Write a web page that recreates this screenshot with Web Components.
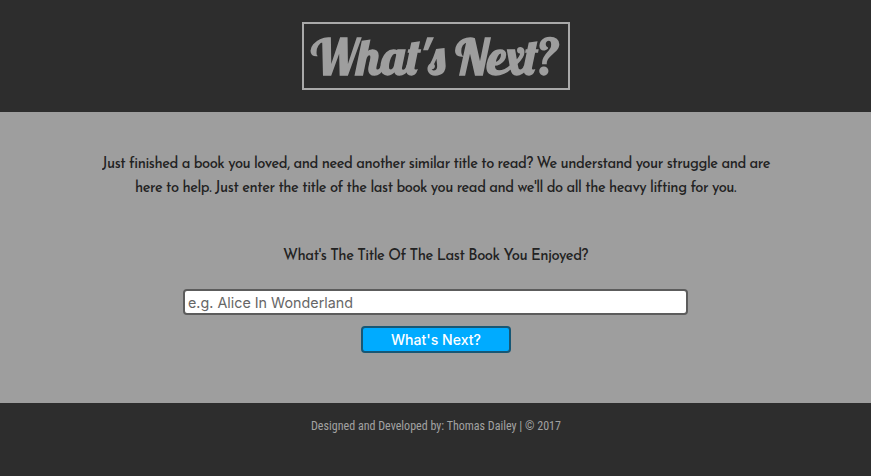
<!DOCTYPE html>
<html lang="en">
<head>
<meta charset="utf-8">
<title>What's Next?</title>
<style>
html, body { margin: 0; height: 100%; background: #2d2d2d; overflow: hidden; }
</style>
</head>
<body>
<book-app></book-app>
<script>
// One run of text stretched to a given width.
class FitText extends HTMLElement {
  connectedCallback() {
    const root = this.attachShadow({ mode: 'open' });
    root.innerHTML = `<style>
      :host { display: inline-block; white-space: nowrap; text-align: left; }
      span { display: inline-block; transform-origin: 0 50%; white-space: nowrap; }
    </style><span><slot></slot></span>`;
    const w = +this.getAttribute('width');
    this.style.width = w + 'px';
    const s = root.querySelector('span');
    s.style.transform = `scaleX(${w / s.getBoundingClientRect().width})`;
  }
}

class SiteHeader extends HTMLElement {
  constructor() {
    super();
    this.attachShadow({ mode: 'open' }).innerHTML = `<style>
      :host { display: flex; justify-content: center; align-items: flex-start; box-sizing: border-box;
        height: 112px; padding-top: 22px; background: #2d2d2d; color: #9e9e9e; }
      h1 { margin: 0; box-sizing: border-box; width: 268px; height: 68px; border: 2px solid #a9a9a9;
        padding: 0 0 0 7px; margin-left: 1px;
        font: bold 48px/67px Lobster, "Liberation Serif", serif; }
    </style><h1><fit-text width="248">What's Next?</fit-text></h1>`;
  }
}

class BookIntro extends HTMLElement {
  constructor() {
    super();
    this.attachShadow({ mode: 'open' }).innerHTML = `<style>
      :host { display: block; text-align: center; color: #222;
        font: 400 16.5px/24px "Reem Kufi", "Josefin Sans", Lato, sans-serif;
        letter-spacing: -.5px; word-spacing: 2.6px; font-feature-settings: "liga" 1; }
      p { margin: 0; }
      p > fit-text { display: block; margin: 0 auto; }
    </style><p><fit-text width="668">Just finished a book you loved, and need another similar title to read? We understand your struggle and are</fit-text>
    <fit-text width="601">here to help. Just enter the title of the last book you read and we'll do all the heavy lifting for you.</fit-text></p>`;
  }
}

class BookForm extends HTMLElement {
  constructor() {
    super();
    this.attachShadow({ mode: 'open' }).innerHTML = `<style>
      :host { display: flex; flex-direction: column; align-items: center; color: #222; }
      label { font: 400 16.5px/24px "Reem Kufi", "Josefin Sans", Lato, sans-serif;
        letter-spacing: -.5px; word-spacing: 2.6px; font-feature-settings: "liga" 1; }
      .field { box-sizing: border-box; width: 505px; height: 26px; margin-top: 22px; border: 2px solid #5c5c5c;
        border-radius: 4px; background: #fff; color: #666; padding-left: 3px; font: 14.6px/24px Inter, sans-serif; }
      button { box-sizing: border-box; width: 150px; height: 27px; margin: 11px 0 0; padding: 0;
        border: 2px solid #175775; border-radius: 4px; background: #00abff; color: #fff;
        font: 450 14.6px/22px Inter, sans-serif; }
    </style>
    <label><fit-text width="305">What's The Title Of The Last Book You Enjoyed?</fit-text></label>
    <div class="field"><fit-text width="165">e.g. Alice In Wonderland</fit-text></div>
    <button><fit-text width="90">What's Next?</fit-text></button>`;
  }
}

class SiteFooter extends HTMLElement {
  constructor() {
    super();
    this.attachShadow({ mode: 'open' }).innerHTML = `<style>
      :host { display: block; box-sizing: border-box; height: 73px; padding-top: 15px; text-align: center;
        background: #2d2d2d; color: #a2a2a2; font: 12px/16px "Roboto Condensed", Roboto, sans-serif; }
    </style><fit-text width="250">Designed and Developed by: Thomas Dailey | © 2017</fit-text>`;
  }
}

class BookApp extends HTMLElement {
  constructor() {
    super();
    this.attachShadow({ mode: 'open' }).innerHTML = `<style>
      :host { display: block; }
      main { box-sizing: border-box; height: 291px; padding-top: 39px; background: #9e9e9e; }
      book-form { margin-top: 44px; }
    </style>
    <site-header></site-header>
    <main><book-intro></book-intro><book-form></book-form></main>
    <site-footer></site-footer>`;
  }
}

customElements.define('book-app', BookApp);
customElements.define('site-header', SiteHeader);
customElements.define('book-intro', BookIntro);
customElements.define('book-form', BookForm);
customElements.define('site-footer', SiteFooter);
customElements.define('fit-text', FitText);
</script>
</body>
</html>
